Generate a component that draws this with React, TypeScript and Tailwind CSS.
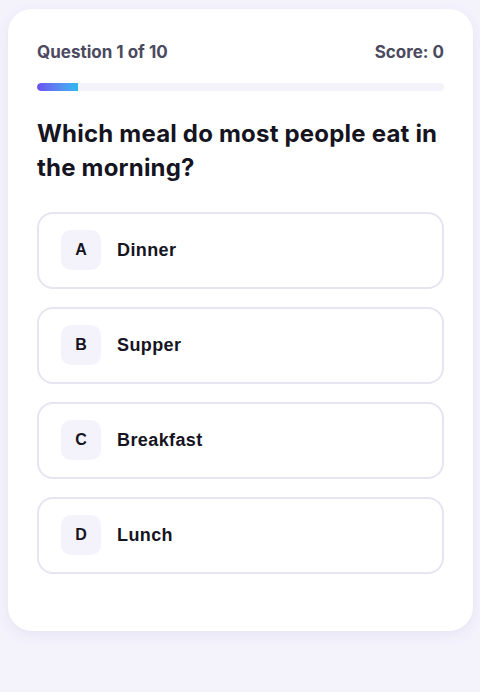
const options = [
  { key: 'A', label: 'Dinner' },
  { key: 'B', label: 'Supper' },
  { key: 'C', label: 'Breakfast' },
  { key: 'D', label: 'Lunch' },
]

export default function App() {
  const current = 1
  const total = 10
  const score = 0

  return (
    <div className="min-h-[692px] w-full bg-[#f4f3fc] pt-[9px] pl-2 pr-[7px] font-['Inter',sans-serif]">
      <div className="rounded-[24px] bg-white px-[29px] pt-[31px] pb-[57px] shadow-[0_4px_14px_rgba(60,50,140,0.08)]">
        <div className="flex items-center justify-between text-[17px] font-bold text-[#4b4a5f]">
          <span>Question {current} of {total}</span>
          <span>Score: {score}</span>
        </div>

        <div className="mt-[17px] h-2 w-full overflow-hidden rounded-full bg-[#f4f3fc]">
          <div
            className="h-full rounded-l-full bg-gradient-to-r from-[#6a4ff0] to-[#2ab8f0]"
            style={{ width: `${(current / total) * 100}%` }}
          />
        </div>

        <h2 className="mt-[26px] text-[24px] leading-[34px] font-bold tracking-[0.2px] text-[#15141f]">
          Which meal do most people eat in the morning?
        </h2>

        <div className="mt-[27px] flex flex-col gap-[18px]">
          {options.map((o) => (
            <button
              key={o.key}
              className="flex h-[77px] w-full items-center gap-4 rounded-[16px] border-2 border-[#e6e5f1] bg-white px-[22px] text-left font-['Liberation_Sans',Arial,sans-serif]"
            >
              <span className="flex h-10 w-10 items-center justify-center rounded-[10px] bg-[#f4f3fc] text-base font-bold text-[#15141f]">
                {o.key}
              </span>
              <span className="text-lg font-bold tracking-[0.4px] text-[#15141f]">{o.label}</span>
            </button>
          ))}
        </div>
      </div>
    </div>
  )
}
